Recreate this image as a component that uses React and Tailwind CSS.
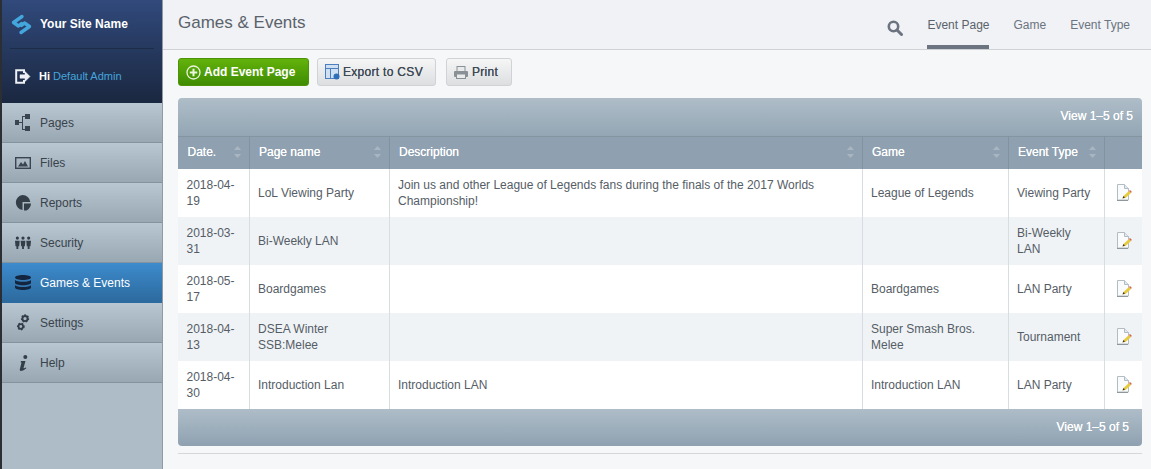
const navItems = [
  ["Pages", PagesIcon],
  ["Files", FilesIcon],
  ["Reports", ReportsIcon],
  ["Security", SecurityIcon],
  ["Games & Events", DbIcon, true],
  ["Settings", SettingsIcon],
  ["Help", HelpIcon],
];
function PagesIcon() {
  return (
    <svg width="16" height="18" viewBox="0 0 16 18" fill="#3a4550">
      <rect x="0" y="6" width="4" height="5" />
      <rect x="10" y="0" width="5" height="5" />
      <rect x="10" y="12" width="5" height="5" />
      <path d="M7 2h3v1H8v12h2v1H7z" />
      <rect x="4" y="8" width="3" height="1" />
    </svg>
  );
}
function FilesIcon() {
  return (
    <svg width="16" height="12" viewBox="0 0 16 12">
      <rect x="0.700" y="0.700" width="14.600" height="10.600" fill="none" stroke="#3a4550" strokeWidth="1.400" />
      <path d="M3 9.500 6 5l2 2.500L10 4l3 5.500z" fill="#3a4550" />
    </svg>
  );
}
function ReportsIcon() {
  return (
    <svg width="16" height="16" viewBox="0 0 16 16" fill="#333e49">
      <path d="M7.500 0a7.800 7.800 0 0 1 7.800 7H7.500v7.900A7.500 7.500 0 0 1 7.500 0z" />
      <path d="M9 8.500h7c-.2 3-1.700 5.500-4.500 7H9z" />
    </svg>
  );
}
function SecurityIcon() {
  const P = ({ x }) => (
    <g fill="#333e49" transform={`translate(${x} 0)`}>
      <circle cx="2.500" cy="1.800" r="1.700" />
      <path d="M0 4.500h5l-.5 6H3.500v3h-2v-3H.5z" />
    </g>
  );
  return (
    <svg width="16" height="14" viewBox="0 0 17 14">
      <P x={0} />
      <P x={6} />
      <P x={12} />
    </svg>
  );
}
function DbIcon() {
  return (
    <svg width="16" height="15" viewBox="0 0 16 15" fill="#14263f">
      <path d="M0 2.500C0 1 3.500 0 8 0s8 1 8 2.500S12.500 5 8 5 0 4 0 2.500z" />
      <path d="M0 5c1 1.200 4 1.800 8 1.800S15 6.200 16 5v3c0 1.200-3.500 2.200-8 2.200S0 9.200 0 8z" />
      <path d="M0 10.300c1 1.200 4 1.800 8 1.800s7-.6 8-1.800V12.500C16 14 12.500 15 8 15s-8-1-8-2.500z" />
    </svg>
  );
}
function Gear({ cx, cy, r }) {
  return (
    <g>
      <circle cx={cx} cy={cy} r={r} fill="none" stroke="#333e49" strokeWidth={r * 0.75} />
      <circle cx={cx} cy={cy} r={r + 0.800} fill="none" stroke="#333e49" strokeWidth="1.600" strokeDasharray="1.500 1.500" />
    </g>
  );
}
function SettingsIcon() {
  return (
    <svg width="13" height="17" viewBox="0 0 13 17">
      <Gear cx={8} cy={4.500} r={2.600} />
      <Gear cx={3.800} cy={12.500} r={2.300} />
    </svg>
  );
}
function HelpIcon() {
  return (
    <svg width="9" height="16" viewBox="0 0 9 16" fill="#333e49">
      <circle cx="6.300" cy="2" r="2" />
      <path d="M2 6h4.500L4.500 13c0 .5.500.6 2.500-.4l.3.700C5 15.500 3 16 1.800 16 .8 16 .6 15 1 13.500L2.500 7.500 1.500 7.300z" />
    </svg>
  );
}
function EditIcon() {
  return (
    <svg width="16" height="17" viewBox="0 0 16 17" className="-mt-[1px]">
      <path d="M1.500.500h7l4 4v11.500h-11z" fill="#fafbfc" stroke="#b3bcc3" />
      <path d="M8.500.500v4h4" fill="#e3e8ec" stroke="#b3bcc3" />
      <path d="M1 16.500h11" stroke="#8e979e" />
      <path d="M6.500 14.500l1-2.500 5.500-5 2 2-5.500 5z" fill="#e8cb3c" />
      <path d="M13 7l2 2 .8-1.200L14 6z" fill="#d8604e" />
      <path d="M6.500 14.500l1-2.500 1.500 1.500z" fill="#333" />
    </svg>
  );
}
function SortArrows() {
  return (
    <svg width="7" height="14" viewBox="0 0 7 14" fill="#a9b6c1" className="shrink-0">
      <path d="M3.500 1 7 5H0z" />
      <path d="M0 9h7l-3.500 4z" />
    </svg>
  );
}
const rows = [
  ["2018-04-19", "LoL Viewing Party", "Join us and other League of Legends fans during the finals of the 2017 Worlds Championship!", "League of Legends", "Viewing Party"],
  ["2018-03-31", "Bi-Weekly LAN", "", "", "Bi-Weekly LAN"],
  ["2018-05-17", "Boardgames", "", "Boardgames", "LAN Party"],
  ["2018-04-13", "DSEA Winter SSB:Melee", "", "Super Smash Bros. Melee", "Tournament"],
  ["2018-04-30", "Introduction Lan", "Introduction LAN", "Introduction LAN", "LAN Party"],
];
const headers = [
  ["Date.", "w-[71px]"],
  ["Page name", "w-[140px]"],
  ["Description", "w-[473px]"],
  ["Game", "w-[146px]"],
  ["Event Type", "w-[96px]"],
];
function Button({ children, icon, className = "" }) {
  return (
    <button className={`flex h-[28px] items-center rounded-[3px] border text-[12px] ${className}`}>
      {icon}
      {children}
    </button>
  );
}
const plainBtn = "border-[#cfd3d6] bg-gradient-to-b from-[#f6f6f6] to-[#dcdee0] text-[#3f4a54] tracking-[0.3px] [text-shadow:0_0_0.6px_#3f4a54]";
export default function App() {
  return (
    <div className="flex h-[469px] w-[1151px] overflow-hidden bg-[#f6f7f9] font-['Liberation_Sans',Arial,sans-serif] text-[12px] text-[#555d66]">
      <aside className="flex w-[163px] shrink-0 flex-col border-l-2 border-r border-l-[#2b2f33] border-r-[#8f9aa3] bg-[#adbcc7]">
        <div className="flex h-[103px] shrink-0 flex-col bg-gradient-to-b from-[#314a7c] to-[#1a2740] px-[8px]">
          <div className="flex h-[49px] items-center gap-[8px] border-b border-[#1d2c47] pl-[1px]">
            <svg width="21" height="21" viewBox="0 0 21 21" fill="none" stroke="#43a6dc" strokeWidth="3.400" strokeLinecap="round" strokeLinejoin="round">
              <path d="M11 2.500 2.500 8.500l5 3.500 3-2.500" />
              <path d="M10 18.500l8.500-6-5-3.500-3 2.500" />
            </svg>
            <span className="text-[12px] font-bold text-white">Your Site Name</span>
          </div>
          <div className="flex flex-1 items-center gap-[8px] pl-[5px] pt-[1px]">
            <svg width="16" height="15" viewBox="0 0 16 15" fill="none" stroke="#eef1f4" strokeWidth="2">
              <path d="M9 4V1.200H1.200v12.600H9V11" />
              <path d="M5 7.500h6M5 5.800h5V2.500l5 5-5 5V9.200H5z" fill="#eef1f4" strokeWidth="0.500" />
            </svg>
            <span className="text-[11px]">
              <span className="font-bold text-white">Hi </span>
              <span className="text-[#45a5dc]">Default Admin</span>
            </span>
          </div>
        </div>
        {navItems.map(([label, Icon, active]) => (
          <div
            key={label}
            className={`flex h-[40px] shrink-0 items-center border-b ${
              active
                ? "border-[#2b6ca3] bg-gradient-to-b from-[#3d8bcd] to-[#2c6a9e] text-white"
                : "border-[#84949f] bg-gradient-to-b from-[#b8c7d1] to-[#98a7b2] text-[#3a434c]"
            }`}
          >
            <span className="flex w-[38px] shrink-0 justify-center pl-[4px]">
              <Icon />
            </span>
            <span>{label}</span>
          </div>
        ))}
      </aside>
      <main className="flex min-w-0 flex-1 flex-col">
        <header className="flex h-[50px] shrink-0 items-stretch justify-between border-b border-[#cfd1d4] bg-[#f0f2f5] pl-[15px] pr-[21px]">
          <h1 className="pt-[13px] text-[17px] font-normal leading-[20px] text-[#5a626b]">Games &amp; Events</h1>
          <nav className="flex items-stretch">
            <span className="mr-[24px] mt-[20px]">
              <svg width="16" height="16" viewBox="0 0 16 16" fill="none" stroke="#6b7480">
                <circle cx="6.500" cy="6.500" r="4.700" strokeWidth="2.600" />
                <path d="M10 10l4.500 4.500" strokeWidth="3" strokeLinecap="round" />
              </svg>
            </span>
            <span className="mr-[24px] flex h-[49px] items-start border-b-[4px] border-[#6b7480] pt-[18px] leading-[14px] text-[#5a626b]">Event Page</span>
            <span className="mr-[24px] pt-[18px] leading-[14px] text-[#6b7480]">Game</span>
            <span className="pt-[18px] leading-[14px] text-[#6b7480]">Event Type</span>
          </nav>
        </header>
        <div className="flex flex-col pl-[15px] pr-[9px]">
          <div className="mt-[8px] flex gap-[8px]">
            <Button
              className="w-[131px] border-[#4f9408] bg-gradient-to-b from-[#63b30c] to-[#3f8c03] pl-[7px] font-bold text-white"
              icon={
                <svg width="15" height="15" viewBox="0 0 15 15" fill="none" stroke="#e9f5dc" className="mr-[3px]">
                  <circle cx="7.500" cy="7.500" r="6.500" strokeWidth="1.300" />
                  <path d="M7.500 3.800v7.400M3.800 7.500h7.400" strokeWidth="2" />
                </svg>
              }
            >
              Add Event Page
            </Button>
            <Button
              className={`w-[119px] pl-[7px] ${plainBtn}`}
              icon={
                <svg width="15" height="16" viewBox="0 0 15 16" className="mr-[3px]">
                  <rect x="0.500" y="0.500" width="13" height="14" fill="#cfe0f2" stroke="#4c7fbe" />
                  <path d="M1 4h12v1H1zM5 4h1v10H5z" fill="#4c7fbe" />
                  <circle cx="11.500" cy="12.500" r="3" fill="#2f6fb8" />
                </svg>
              }
            >
              Export to CSV
            </Button>
            <Button
              className={`ml-[2px] w-[66px] pl-[7px] ${plainBtn}`}
              icon={
                <svg width="14" height="13" viewBox="0 0 14 13" fill="#8a9196" className="mr-[4px]">
                  <rect x="3" y="0.500" width="8" height="5" fill="#e8eaec" stroke="#8a9196" />
                  <rect x="0" y="5" width="14" height="6" rx="1" />
                  <rect x="2.500" y="8" width="9" height="4.500" fill="#e8eaec" stroke="#8a9196" />
                </svg>
              }
            >
              Print
            </Button>
          </div>
          <div className="mt-[12px] overflow-hidden rounded-[4px]">
            <div className="flex h-[38px] items-center justify-end bg-gradient-to-b from-[#aebdc8] to-[#94a6b4] pb-[2px] pr-[9px] text-white [text-shadow:0_0_0.6px_#fff]">
              View 1–5 of 5
            </div>
            <table className="w-[964px] table-fixed border-collapse">
              <thead>
                <tr className="h-[32px] border-t border-[#84959f] bg-[#8fa1b1] text-left text-white">
                  {headers.map(([h, w]) => (
                    <th key={h} className={`${w} border-r border-[#81939f] pb-[1px] pl-[9.500px] pr-[8px] pt-0 font-normal [text-shadow:0_0_0.6px_#fff]`}>
                      <div className="flex items-center justify-between">
                        <span>{h}</span>
                        <SortArrows />
                      </div>
                    </th>
                  ))}
                  <th className="w-[38px] p-0" />
                </tr>
              </thead>
              <tbody>
                {rows.map((r, i) => (
                  <tr key={r[0]} className={`h-[48px] ${i % 2 ? "bg-[#f0f3f6]" : "bg-white"}`}>
                    {r.map((c, j) => (
                      <td key={j} className="border-r border-[#d8dde1] pl-[8.500px] pr-[8px] py-0 align-middle leading-[16px]">
                        {c}
                      </td>
                    ))}
                    <td className="border-r border-[#d8dde1] p-0">
                      <div className="flex justify-center pl-[1px]">
                        <EditIcon />
                      </div>
                    </td>
                  </tr>
                ))}
              </tbody>
            </table>
            <div className="flex h-[37px] items-center justify-end bg-gradient-to-b from-[#aebdc8] to-[#8fa1b1] pr-[13px] text-white [text-shadow:0_0_0.6px_#fff]">
              View 1–5 of 5
            </div>
          </div>
          <div className="mt-[7px] h-px w-[964px] bg-[#d5d8db]" />
        </div>
      </main>
    </div>
  );
}
